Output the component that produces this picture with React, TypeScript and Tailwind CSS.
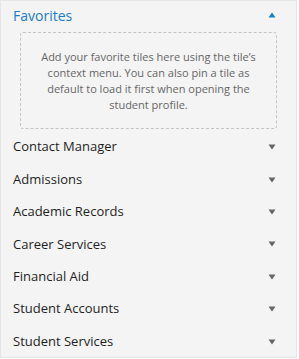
const sections = [
  "Contact Manager",
  "Admissions",
  "Academic Records",
  "Career Services",
  "Financial Aid",
  "Student Accounts",
  "Student Services",
];

function Caret({ up }: { up?: boolean }) {
  return (
    <svg width="8" height="6" viewBox="0 0 8 6" className={up ? "text-[#1b7ccb]" : "text-[#666666]"}>
      {up ? <path d="M4 0.5L7.5 5.5H0.5Z" fill="currentColor" /> : <path d="M0.5 0.5H7.5L4 5.5Z" fill="currentColor" />}
    </svg>
  );
}

export default function App() {
  return (
    <div className="w-[299px] h-[359px] bg-white" style={{ fontFamily: '"Open Sans", sans-serif' }}>
      <div className="w-[297px] h-[358px] bg-[#f4f4f4] border border-[#e6e6e6]">
        <div className="flex items-center justify-between pl-[12px] pr-[20px] h-[28px]">
          <span className="text-[14px] text-[#1b7ccb]">Favorites</span>
          <Caret up />
        </div>
        <div className="mx-[19px] mt-[3px] h-[97px] border border-dashed border-[#c4c4c4] rounded-[3px] flex items-center justify-center px-[20px]">
          <p className="text-[11px] leading-[16px] text-[#666666] text-center">
            Add your favorite tiles here using the tile’s context menu. You can also pin a tile as default to load it first when opening the student profile.
          </p>
        </div>
        <div className="mt-[2px]">
          {sections.map((s) => (
            <div key={s} className="flex items-center justify-between pl-[12px] pr-[20px] h-[32.4px]">
              <span className="text-[13px] text-[#1e1e1e]">{s}</span>
              <Caret />
            </div>
          ))}
        </div>
      </div>
    </div>
  );
}
